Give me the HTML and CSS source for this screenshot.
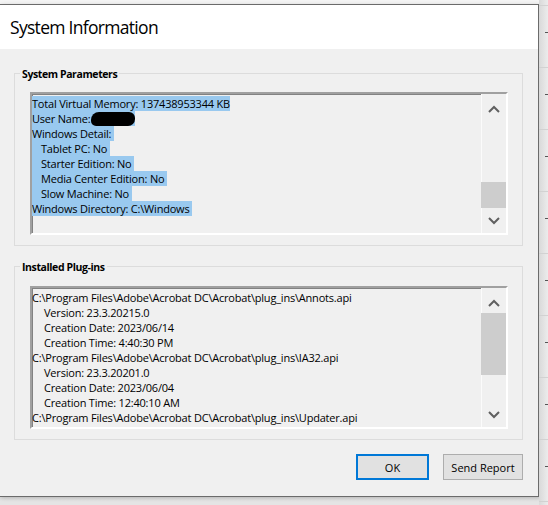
FILE: index.html
```html
<!DOCTYPE html>
<html>
  <head>
    <title>System Information</title>
    <meta charset="UTF-8" />
    <link rel="stylesheet" href="styles.css">
  </head>
  <body>
    <div class="screen">
      <div class="dialog">
        <div class="titlebar">System Information</div>

        <div class="content">
          <div class="group">
            <div class="group-title">System Parameters</div>
            <div class="listbox">
              <div class="lines">
                <div class="line sel">Total Virtual Memory: 137438953344 KB</div>
                <div class="line sel">User Name: <span class="redact"></span></div>
                <div class="line sel">Windows Detail:&nbsp;</div>
                <div class="line sel sub">Tablet PC: No&nbsp;</div>
                <div class="line sel sub">Starter Edition: No&nbsp;</div>
                <div class="line sel sub">Media Center Edition: No&nbsp;</div>
                <div class="line sel sub">Slow Machine: No&nbsp;</div>
                <div class="line sel">Windows Directory: C:\Windows&nbsp;</div>
              </div>
              <div class="scrollbar">
                <div class="sb-btn up">
                  <svg width="12" height="8" viewBox="0 0 12 8"><polyline points="1,7 6,2 11,7" /></svg>
                </div>
                <div class="track end">
                  <div class="thumb small"></div>
                </div>
                <div class="sb-btn down">
                  <svg width="12" height="8" viewBox="0 0 12 8"><polyline points="1,1 6,6 11,1" /></svg>
                </div>
              </div>
            </div>
          </div>

          <div class="group second">
            <div class="group-title">Installed Plug-ins</div>
            <div class="listbox">
              <div class="lines">
                <div class="line">C:\Program Files\Adobe\Acrobat DC\Acrobat\plug_ins\Annots.api</div>
                <div class="line deep">Version: 23.3.20215.0</div>
                <div class="line deep">Creation Date: 2023/06/14</div>
                <div class="line deep">Creation Time: 4:40:30 PM</div>
                <div class="line">C:\Program Files\Adobe\Acrobat DC\Acrobat\plug_ins\IA32.api</div>
                <div class="line deep">Version: 23.3.20201.0</div>
                <div class="line deep">Creation Date: 2023/06/04</div>
                <div class="line deep">Creation Time: 12:40:10 AM</div>
                <div class="line">C:\Program Files\Adobe\Acrobat DC\Acrobat\plug_ins\Updater.api</div>
              </div>
              <div class="scrollbar">
                <div class="sb-btn up">
                  <svg width="12" height="8" viewBox="0 0 12 8"><polyline points="1,7 6,2 11,7" /></svg>
                </div>
                <div class="track">
                  <div class="thumb big"></div>
                </div>
                <div class="sb-btn down">
                  <svg width="12" height="8" viewBox="0 0 12 8"><polyline points="1,1 6,6 11,1" /></svg>
                </div>
              </div>
            </div>
          </div>

          <div class="buttons">
            <button type="button" class="btn default">OK</button>
            <button type="button" class="btn report">Send Report</button>
          </div>
        </div>
      </div>
      <div class="backdrop"></div>
    </div>
  </body>
</html>
```

FILE: styles.css
```css
html,
body {
  margin: 0;
  padding: 0;
}
body {
  background: #f4f4f4;
  font-family: "Open Sans", "Noto Sans", sans-serif;
  font-size: 11px;
  color: #000;
  width: 548px;
  height: 505px;
  overflow: hidden;
}
.screen {
  display: flex;
  padding-top: 4px;
  height: 501px;
  background: linear-gradient(#f4f4f4 0, #f4f4f4 492px, #d6d6d6 493px, #e4e4e4 501px);
}
.dialog {
  width: 538px;
  height: 491px;
  border-top: 1px solid #6b6b6b;
  border-right: 1px solid #6b6b6b;
  border-bottom: 1px solid #6b6b6b;
  background: #f0f0f0;
  display: flex;
  flex-direction: column;
  box-shadow: 1px 1px 4px rgba(0, 0, 0, 0.18);
}
.titlebar {
  height: 44px;
  line-height: 44px;
  background: #fff;
  padding-left: 10px;
  font-size: 17.5px;
  letter-spacing: -0.7px;
  color: #000;
}
.content {
  flex: 1;
  padding: 24px 15px 0 14px;
}
.group {
  border: 1px solid #dcdcdc;
  padding: 0 14px 10px 15px;
}
.group.second {
  margin-top: 20px;
}
.group-title {
  width: fit-content;
  margin: -8px 0 10px -10px;
  padding: 0 2px;
  background: #f0f0f0;
  font-weight: bold;
  font-size: 10.5px;
  letter-spacing: -0.4px;
  line-height: 16px;
}
.second .group-title {
  margin-bottom: 11px;
}
.listbox {
  height: 139px;
  display: flex;
  border: 2px solid;
  border-color: #a0a0a0 #fff #fff #a0a0a0;
  box-shadow: inset 1px 1px 0 #828282;
  background: #f0f0f0;
}
.lines {
  flex: 1;
  padding-top: 2px;
  overflow: hidden;
  letter-spacing: -0.2px;
}
.line {
  line-height: 15px;
  height: 15px;
  white-space: nowrap;
}
.sel {
  width: fit-content;
  background: #99c9ef;
}
.sub {
  padding-left: 9px;
}
.deep {
  padding-left: 12px;
}
.redact {
  display: inline-block;
  width: 44px;
  height: 14px;
  margin-left: -2px;
  background: #000;
  border-radius: 8px 6px 7px 5px;
  vertical-align: -3px;
}
.scrollbar {
  width: 24px;
  display: flex;
  flex-direction: column;
  border-left: 1px solid #fbfbfb;
  background: #f0f0f0;
}
.sb-btn {
  height: 25px;
  display: flex;
  align-items: center;
  justify-content: center;
}
.sb-btn.up {
  padding-top: 4px;
  height: 21px;
}
.sb-btn polyline {
  fill: none;
  stroke: #606060;
  stroke-width: 2;
}
.track {
  flex: 1;
  display: flex;
  flex-direction: column;
}
.track.end {
  justify-content: flex-end;
}
.thumb {
  background: #cdcdcd;
  margin-left: -1px;
}
.thumb.small {
  height: 26px;
}
.thumb.big {
  height: 62px;
}
.buttons {
  display: flex;
  justify-content: flex-end;
  gap: 14px;
  margin-top: 14px;
}
.btn {
  height: 26px;
  font-family: inherit;
  font-size: 11px;
  color: #000;
  background: #e1e1e1;
  border: 1px solid #adadad;
  padding: 0;
}
.btn.default {
  width: 73px;
  border: 2px solid #0078d7;
}
.btn.report {
  width: 80px;
}
.backdrop {
  flex: 1;
  margin-top: -4px;
  height: 505px;
  background:
    repeating-linear-gradient(to bottom, transparent 0, transparent 28px, #555 28px, #555 29px, transparent 29px, transparent 62px) right 0 top 4px / 3px 100% no-repeat,
    repeating-linear-gradient(to bottom, transparent 0, transparent 5px, #d2d2d2 5px, #d2d2d2 6px, transparent 6px, transparent 62px),
    linear-gradient(to right, #d9d9d9, #ececec);
}
```
